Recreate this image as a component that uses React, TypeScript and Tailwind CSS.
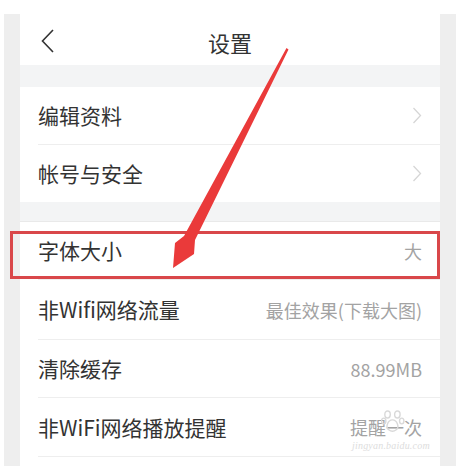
import React from "react";

type Row = { label: string; value?: string; arrow?: boolean; h: string; line?: boolean };

const groupOne: Row[] = [
  { label: "编辑资料", arrow: true, h: "h-[58px]", line: true },
  { label: "帐号与安全", arrow: true, h: "h-[57px]" },
];

const groupTwo: Row[] = [
  { label: "字体大小", value: "大", h: "h-[58px]", line: true },
  { label: "非Wifi网络流量", value: "最佳效果(下载大图)", h: "h-[60px]", line: true },
  { label: "清除缓存", value: "88.99MB", h: "h-[58px]", line: true },
  { label: "非WiFi网络播放提醒", value: "提醒一次", h: "h-[59px]", line: true },
  { label: "", h: "h-[58px]" },
];

const ChevronRight = () => (
  <svg width="10" height="17" viewBox="0 0 10 17" fill="none">
    <path d="M1.5 1 L8.5 8.5 L1.5 16" stroke="#d6d6d6" strokeWidth="1.3" />
  </svg>
);

const SettingRow = ({ row }: { row: Row }) => (
  <div className={`${row.h} shrink-0 pl-[18px]`}>
    <div
      className={`h-full flex items-center justify-between pr-[18px] ${
        row.line ? "border-b border-[#eeeeee]" : ""
      }`}
    >
      <span className="text-[21px] text-[#333333] leading-none">{row.label}</span>
      {row.value && <span className="text-[18px] text-[#a3a3a3] leading-none">{row.value}</span>}
      {row.arrow && <ChevronRight />}
    </div>
  </div>
);

const App = () => {
  return (
    <div className="relative w-[462px] h-[466px] overflow-hidden bg-white pt-[14px] pl-[4px] pr-[6px] font-['Noto_Sans_CJK_SC','Noto_Sans',sans-serif]">
      <div className="h-full bg-[#eeeeee] px-[16px]">
        <div className="h-full bg-white flex flex-col overflow-hidden">
          {/* header */}
          <div className="h-[51px] shrink-0 relative flex items-center justify-center">
            <svg
              className="absolute left-[21px] top-[15px]"
              width="13"
              height="24"
              viewBox="0 0 13 24"
              fill="none"
            >
              <path d="M12 1 L1.5 12 L12 23" stroke="#333333" strokeWidth="1.6" />
            </svg>
            <span className="text-[22px] text-[#333333] leading-none pt-[4px]">设置</span>
          </div>
          <div className="h-[22px] shrink-0 bg-[#f3f4f5]" />
          {groupOne.map((r) => (
            <SettingRow key={r.label} row={r} />
          ))}
          <div className="h-[20px] shrink-0 bg-[#f3f4f5] border-b border-[#e9e9e9]" />
          {groupTwo.map((r, i) => (
            <SettingRow key={i} row={r} />
          ))}
        </div>
      </div>

      {/* highlight box */}
      <div className="absolute left-[10px] top-[231px] w-[430px] h-[48px] border-[3px] border-[#d9474a]" />

      {/* watermark */}
      <div className="absolute left-[350px] top-[408px] w-[90px] h-[45px] pointer-events-none">
        <svg className="absolute left-[31px] top-[1px]" width="24" height="24" viewBox="0 0 22 22" fill="none">
          <ellipse cx="6" cy="5" rx="2.5" ry="3.2" stroke="#d9d9d9" strokeWidth="1.3" />
          <ellipse cx="15" cy="5" rx="2.5" ry="3.2" stroke="#d9d9d9" strokeWidth="1.3" />
          <ellipse cx="2.5" cy="11" rx="2" ry="2.6" stroke="#d9d9d9" strokeWidth="1.3" />
          <ellipse cx="19" cy="11" rx="2" ry="2.6" stroke="#d9d9d9" strokeWidth="1.3" />
          <path d="M10.5 10 C6 10 4 17 7 19 C9 20.5 12 20.5 14 19 C17 17 15 10 10.5 10 Z" stroke="#d9d9d9" strokeWidth="1.3" />
        </svg>
        <span className="absolute left-[2px] top-[33px] text-[10px] italic text-[#dddddd] leading-none tracking-[0.2px] font-['Liberation_Serif',serif]">
          jingyan.baidu.com
        </span>
      </div>

      {/* red arrow */}
      <svg className="absolute left-0 top-0 pointer-events-none" width="462" height="466" viewBox="0 0 462 466">
        <polygon
          points="286.5,48 288.5,49.5 195,240 194,254 173,268 175,243 184,236"
          fill="#ea3a3a"
        />
      </svg>
    </div>
  );
};

export default App;
